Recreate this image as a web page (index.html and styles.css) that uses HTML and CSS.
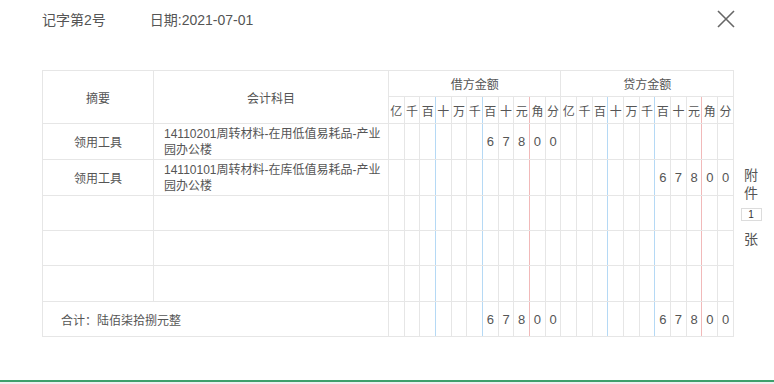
FILE: index.html
```html
<!DOCTYPE html>
<html lang="zh">
<head>
<meta charset="utf-8">
<title>凭证</title>
<link rel="stylesheet" href="styles.css">
</head>
<body>
<div class="page">
  <header class="top">
    <span class="voucher-no">记字第2号</span>
    <span class="voucher-date">日期:2021-07-01</span>
    <span class="close" aria-label="关闭">
      <svg width="18" height="18" viewBox="0 0 18 18"><path d="M1 1 L17 17 M17 1 L1 17" stroke="#666" stroke-width="1.6" fill="none"/></svg>
    </span>
  </header>

  <main class="body">
    <table class="voucher">
      <colgroup>
        <col class="c-sum"><col class="c-acct">
        <col><col><col><col><col><col><col><col><col><col><col>
        <col><col><col><col><col><col><col><col><col><col><col>
      </colgroup>
      <thead>
        <tr class="h1">
          <th rowspan="2">摘要</th>
          <th rowspan="2">会计科目</th>
          <th colspan="11">借方金额</th>
          <th colspan="11">贷方金额</th>
        </tr>
        <tr class="h2">
          <th>亿</th><th>千</th><th class="b">百</th><th>十</th><th>万</th><th class="b">千</th><th>百</th><th>十</th><th class="r">元</th><th>角</th><th>分</th>
          <th>亿</th><th>千</th><th class="b">百</th><th>十</th><th>万</th><th class="b">千</th><th>百</th><th>十</th><th class="r">元</th><th>角</th><th>分</th>
        </tr>
      </thead>
      <tbody>
        <tr class="row">
          <td class="sum">领用工具</td>
          <td class="acct">14110201周转材料-在用低值易耗品-产业<br>园办公楼</td>
          <td></td><td></td><td class="b"></td><td></td><td></td><td class="b"></td><td>6</td><td>7</td><td class="r">8</td><td>0</td><td>0</td>
          <td></td><td></td><td class="b"></td><td></td><td></td><td class="b"></td><td></td><td></td><td class="r"></td><td></td><td></td>
        </tr>
        <tr class="row">
          <td class="sum">领用工具</td>
          <td class="acct">14110101周转材料-在库低值易耗品-产业<br>园办公楼</td>
          <td></td><td></td><td class="b"></td><td></td><td></td><td class="b"></td><td></td><td></td><td class="r"></td><td></td><td></td>
          <td></td><td></td><td class="b"></td><td></td><td></td><td class="b"></td><td>6</td><td>7</td><td class="r">8</td><td>0</td><td>0</td>
        </tr>
        <tr class="row short">
          <td class="sum"></td><td class="acct"></td>
          <td></td><td></td><td class="b"></td><td></td><td></td><td class="b"></td><td></td><td></td><td class="r"></td><td></td><td></td>
          <td></td><td></td><td class="b"></td><td></td><td></td><td class="b"></td><td></td><td></td><td class="r"></td><td></td><td></td>
        </tr>
        <tr class="row short">
          <td class="sum"></td><td class="acct"></td>
          <td></td><td></td><td class="b"></td><td></td><td></td><td class="b"></td><td></td><td></td><td class="r"></td><td></td><td></td>
          <td></td><td></td><td class="b"></td><td></td><td></td><td class="b"></td><td></td><td></td><td class="r"></td><td></td><td></td>
        </tr>
        <tr class="row">
          <td class="sum"></td><td class="acct"></td>
          <td></td><td></td><td class="b"></td><td></td><td></td><td class="b"></td><td></td><td></td><td class="r"></td><td></td><td></td>
          <td></td><td></td><td class="b"></td><td></td><td></td><td class="b"></td><td></td><td></td><td class="r"></td><td></td><td></td>
        </tr>
        <tr class="row short total">
          <td class="total-label" colspan="2">合计：陆佰柒拾捌元整</td>
          <td></td><td></td><td class="b"></td><td></td><td></td><td class="b"></td><td>6</td><td>7</td><td class="r">8</td><td>0</td><td>0</td>
          <td></td><td></td><td class="b"></td><td></td><td></td><td class="b"></td><td>6</td><td>7</td><td class="r">8</td><td>0</td><td>0</td>
        </tr>
      </tbody>
    </table>

    <aside class="attach">
      <span class="attach-ch">附</span>
      <span class="attach-ch">件</span>
      <span class="attach-count">1</span>
      <span class="attach-ch zhang">张</span>
    </aside>
  </main>

  <footer class="under"></footer>
</div>
</body>
</html>
```

FILE: styles.css
```css
* { box-sizing: border-box; }

html, body {
  margin: 0;
  padding: 0;
  background: #fff;
}

body {
  font-family: "Liberation Sans", "Noto Sans CJK SC", sans-serif;
  color: #555;
}

.page {
  width: 774px;
  height: 384px;
  display: flex;
  flex-direction: column;
  overflow: hidden;
}

.top {
  height: 37px;
  display: flex;
  align-items: center;
  padding: 0 39px 0 42px;
  font-size: 14px;
  color: #555;
}

.voucher-no { margin-right: 44px; }

.close {
  margin-left: auto;
  display: flex;
  width: 18px;
  height: 18px;
}

.body {
  display: flex;
  align-items: flex-start;
  margin-top: 33px;
  padding-left: 42px;
}

.voucher {
  width: 692px;
  table-layout: fixed;
  border-collapse: collapse;
  font-size: 12px;
  color: #555;
}

.c-sum { width: 111px; }
.c-acct { width: 235px; }

.voucher th,
.voucher td {
  border: 1px solid #e6e6e6;
  padding: 0;
  text-align: center;
  font-weight: normal;
}

.voucher .b { border-right-color: #b5d9f5; }
.voucher .r { border-right-color: #f1b9b9; }

.h1 th { height: 26px; }
.h2 th { height: 27px; font-size: 12px; }

.row td { height: 36px; font-size: 13px; }
.row.short td { height: 35px; }

.row td.sum { font-size: 12px; }

.row td.acct {
  text-align: left;
  padding: 0 4px 0 10px;
  font-size: 12px;
  line-height: 16px;
}

.row td.total-label {
  text-align: left;
  padding-left: 18px;
  font-size: 12px;
}

.attach {
  width: 34px;
  margin-top: 96px;
  display: flex;
  flex-direction: column;
  align-items: center;
  font-size: 14px;
  color: #555;
}

.attach-ch { line-height: 18px; }

.attach-count {
  margin-top: 6px;
  width: 21px;
  height: 13px;
  border: 1px solid #dcdcdc;
  font-size: 10px;
  line-height: 11px;
  text-align: center;
  color: #333;
}

.zhang { margin-top: 9px; }

.under {
  margin-top: auto;
  height: 4px;
  border-top: 2px solid #3da06c;
  background: #eeeeee;
}
```
